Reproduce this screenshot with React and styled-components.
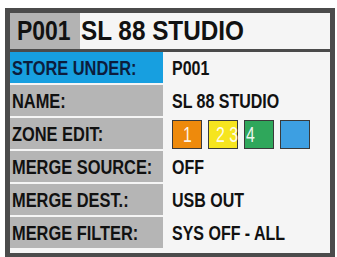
import React from 'react';
import styled, { createGlobalStyle } from 'styled-components';

const GlobalStyle = createGlobalStyle`
  body {
    margin: 0;
    background: #ffffff;
    font-family: "Liberation Sans", Arial, sans-serif;
  }
`;

// Outer LCD frame
const Screen = styled.div`
  box-sizing: border-box;
  margin: 8px 0 0 5px;
  width: 330px;
  height: 249px;
  border: 5px solid #4b4b4b;
  border-bottom-width: 4px;
  background: #f5f5f5;
  display: flex;
  flex-direction: column;
`;

// the display font is a condensed grotesk, so squeeze Liberation Sans horizontally
const Narrow = styled.span`
  display: inline-block;
  white-space: nowrap;
  transform: scaleX(${p => p.$x || 0.82});
  transform-origin: left center;
`;

const TitleBar = styled.div`
  display: flex;
  height: 36px;
  border-bottom: 3px solid #4b4b4b;
  font-size: 27px;
  font-weight: bold;
  color: #111;
  line-height: 36px;
`;

const TitleId = styled.div`
  width: 70px;
  box-sizing: border-box;
  padding-left: 7px;
  background: #b3b3b3;
`;

const TitleName = styled.div`
  padding-left: 1px;
`;

const Rows = styled.div`
  display: flex;
  flex-direction: column;
  gap: 2px;
`;

const Row = styled.div`
  display: grid;
  grid-template-columns: 153px 1fr;
  height: 31px;
`;

const Label = styled.div`
  display: flex;
  align-items: center;
  padding: 2px 0 0 2px;
  overflow: hidden;
  background: ${p => (p.$active ? '#179fe0' : '#b5b5b5')};
  color: ${p => (p.$active ? '#0c1d3d' : '#111')};
  font-size: 20px;
  font-weight: bold;
`;

const Value = styled.div`
  display: flex;
  align-items: center;
  padding: 1px 0 0 9px;
  font-size: 19.5px;
  font-weight: bold;
  color: #111;
`;

const Swatches = styled.div`
  display: flex;
  gap: 6px;
  align-items: center;
`;

const Swatch = styled.div`
  box-sizing: border-box;
  width: 30px;
  height: 29px;
  border: 1px solid #3a3a3a;
  background: ${p => p.$color};
  color: rgba(255, 255, 255, 0.92);
  font-size: 22px;
  font-weight: normal;
  line-height: 28px;
  white-space: nowrap;
  padding-left: ${p => p.$pad || 0}px;
`;

const rows = [
  { label: 'STORE UNDER:', value: 'P001', active: true },
  { label: 'NAME:', value: 'SL 88 STUDIO' },
  { label: 'ZONE EDIT:', zones: true },
  { label: 'MERGE SOURCE:', value: 'OFF' },
  { label: 'MERGE DEST.:', value: 'USB OUT' },
  { label: 'MERGE FILTER:', value: 'SYS OFF - ALL' },
];

const App = () => (
  <>
    <GlobalStyle />
    <Screen>
      <TitleBar>
        <TitleId><Narrow $x={0.85}>P001</Narrow></TitleId>
        <TitleName><Narrow $x={0.9}>SL 88 STUDIO</Narrow></TitleName>
      </TitleBar>
      <Rows>
        {rows.map(r => (
          <Row key={r.label}>
            <Label $active={r.active}><Narrow>{r.label}</Narrow></Label>
            {r.zones ? (
              <Value>
                <Swatches>
                  <Swatch $color="#ee8a0c" $pad={10}><Narrow $x={0.72}>1</Narrow></Swatch>
                  <Swatch $color="#f6e51f" $pad={7}><Narrow $x={0.72}>2 3</Narrow></Swatch>
                  <Swatch $color="#2fa75b" $pad={1}><Narrow $x={0.72}>4</Narrow></Swatch>
                  <Swatch $color="#3d9fe2" />
                </Swatches>
              </Value>
            ) : (
              <Value><Narrow>{r.value}</Narrow></Value>
            )}
          </Row>
        ))}
      </Rows>
    </Screen>
  </>
);

export default App;
